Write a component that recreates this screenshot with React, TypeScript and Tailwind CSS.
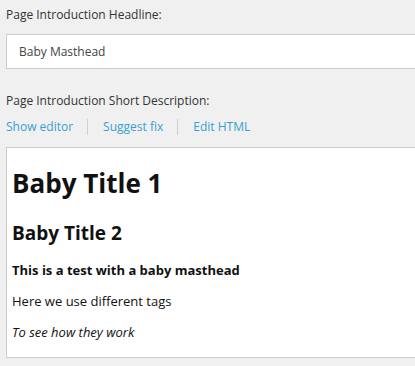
export default function App() {
  return (
    <div
      className="h-[366px] w-[415px] overflow-hidden bg-[#f0f0f0] pl-[6px] pt-[6px] text-[12px] text-[#333]"
      style={{ fontFamily: '"Open Sans", sans-serif' }}
    >
      <label className="block leading-[18px]">Page Introduction Headline:</label>
      <div className="mt-[10px] flex h-[35px] w-[430px] items-center border border-[#ccc] bg-white pl-[12px] leading-[18px] text-[#444]">
        Baby Masthead
      </div>

      <label className="mt-[23px] block leading-[18px]">Page Introduction Short Description:</label>
      <div className="mt-[8px] flex items-center leading-[18px] text-[#3a9fd0]">
        <span>Show editor</span>
        <span className="ml-[14px] mr-[15px] h-[16px] w-px bg-[#d0d0d0]" />
        <span>Suggest fix</span>
        <span className="ml-[14px] mr-[15px] h-[16px] w-px bg-[#d0d0d0]" />
        <span>Edit HTML</span>
      </div>

      {/* editor preview */}
      <div className="mt-[11px] h-[211px] w-[430px] border border-[#ccc] bg-white px-[5px] pt-[17px] text-[#111]">
        <h1 className="text-[26px] font-bold leading-[36px]">Baby Title 1</h1>
        <h2 className="mt-[18px] text-[19px] font-bold leading-[28px]">Baby Title 2</h2>
        <p className="mt-[13px] text-[13px] font-bold leading-[20px]">This is a test with a baby masthead</p>
        <p className="mt-[11px] text-[13px] leading-[20px]">Here we use different tags</p>
        <p className="mt-[11px] text-[13px] italic leading-[20px]">To see how they work</p>
      </div>
    </div>
  )
}
